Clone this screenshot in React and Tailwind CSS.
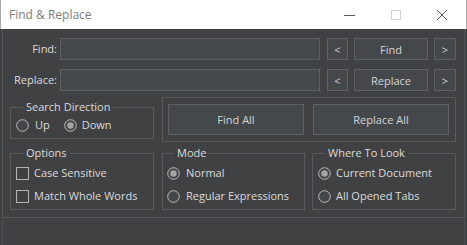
import React from 'react';

const Radio = ({ checked }) => (
  <svg width="13" height="13" viewBox="0 0 13 13" className="shrink-0">
    <circle cx="6.5" cy="6.5" r="5.8" fill="#45484a" stroke="#b9b9b9" strokeWidth="1" />
    {checked && <circle cx="6.5" cy="6.5" r="3.2" fill="#a3a3a3" />}
  </svg>
);

const Check = () => (
  <span className="block w-[13px] h-[13px] shrink-0 border border-[#b4b4b4] bg-[#3f4143]" />
);

const Option = ({ children, gap, control }) => (
  <div className={`flex items-center h-[14px] ${gap}`}>
    {control}
    <span className="leading-[14px] whitespace-nowrap">{children}</span>
  </div>
);

const Group = ({ title, width, pad, children }) => (
  <fieldset className={`${width} border border-[#585b5d] ${pad}`}>
    <legend className="ml-[7px] px-[3px] leading-[14px] text-[#dcdcdc]">{title}</legend>
    {children}
  </fieldset>
);

const Btn = ({ children, className }) => (
  <button
    type="button"
    className={`h-[22px] border border-[#5f6264] bg-[#45484a] text-[#d4d4d4] flex items-center justify-center leading-none ${className}`}
  >
    {children}
  </button>
);

const Input = () => (
  <div className="ml-[3px] w-[260px] h-[22px] border border-[#5e6163] bg-[#46494b]" />
);

export default function App() {
  return (
    <div
      className="w-[467px] h-[245px] flex flex-col bg-[#3f4143] text-[11px] text-[#dcdcdc] overflow-hidden"
      style={{ fontFamily: '"Open Sans", "Noto Sans", sans-serif' }}
    >
      {/* title bar */}
      <div className="h-[29px] shrink-0 bg-white border-x border-[#a9a9a9] flex items-center">
        <span className="ml-[8px] text-[12px] text-[#7c7c7c]">Find &amp; Replace</span>
        <div className="ml-auto flex items-center">
          <svg width="12" height="12" viewBox="0 0 12 12" className="mr-[34px]">
            <line x1="0" y1="6.5" x2="11" y2="6.5" stroke="#5a5a5a" strokeWidth="1" />
          </svg>
          <svg width="12" height="12" viewBox="0 0 12 12" className="mr-[34px]">
            <rect x="1.5" y="1.5" width="9" height="9" fill="none" stroke="#d2d2d2" strokeWidth="1" />
          </svg>
          <svg width="12" height="12" viewBox="0 0 12 12" className="mr-[18px]">
            <path d="M1 1 L11 11 M11 1 L1 11" stroke="#5a5a5a" strokeWidth="1" />
          </svg>
        </div>
      </div>

      {/* body */}
      <div className="flex-1 flex flex-col px-[2px]">
        <div className="border-x border-b border-[#54575a] pt-[9px] pb-[7px]">
          <div className="flex items-center h-[22px]">
            <span className="w-[54px] text-right">Find:</span>
            <Input />
            <Btn className="ml-[7px] w-[21px] text-[#b8b8b8]">&lt;</Btn>
            <Btn className="ml-[6px] w-[74px]">Find</Btn>
            <Btn className="ml-[6px] w-[22px] text-[#b8b8b8]">&gt;</Btn>
          </div>
          <div className="flex items-center h-[22px] mt-[9px]">
            <span className="w-[54px] text-right">Replace:</span>
            <Input />
            <Btn className="ml-[7px] w-[21px] text-[#b8b8b8]">&lt;</Btn>
            <Btn className="ml-[6px] w-[74px]">Replace</Btn>
            <Btn className="ml-[6px] w-[22px] text-[#b8b8b8]">&gt;</Btn>
          </div>

          <div className="flex items-start mt-[6px] pl-[7px]">
            <Group title="Search Direction" width="w-[144px] mt-[3px]" pad="pl-[5px] pt-[4px] pb-[6px]">
              <div className="flex items-center">
                <Option gap="gap-[6px]" control={<Radio />}>Up</Option>
                <div className="ml-[14px]">
                  <Option gap="gap-[5px]" control={<Radio checked />}>Down</Option>
                </div>
              </div>
            </Group>
            <div className="ml-[8px] w-[294px] h-[45px] border border-[#585b5d] px-[5px] pt-[6px] grid grid-cols-2 gap-[8px]">
              <Btn className="h-[31px] w-[136px]">Find All</Btn>
              <Btn className="h-[31px] w-[136px]">Replace All</Btn>
            </div>
          </div>

          <div className="flex items-start mt-[4px] pl-[7px]">
            <Group title="Options" width="w-[144px]" pad="pl-[5px] pt-[6px] pb-[6px]">
              <div className="flex flex-col gap-[9px]">
                <Option gap="gap-[5px]" control={<Check />}>Case Sensitive</Option>
                <Option gap="gap-[5px]" control={<Check />}>Match Whole Words</Option>
              </div>
            </Group>
            <Group title="Mode" width="ml-[8px] w-[143px]" pad="pl-[4px] pt-[6px] pb-[6px]">
              <div className="flex flex-col gap-[9px]">
                <Option gap="gap-[6px]" control={<Radio checked />}>Normal</Option>
                <Option gap="gap-[6px]" control={<Radio />}>Regular Expressions</Option>
              </div>
            </Group>
            <Group title="Where To Look" width="ml-[7px] w-[144px]" pad="pl-[5px] pt-[6px] pb-[6px]">
              <div className="flex flex-col gap-[9px]">
                <Option gap="gap-[5px]" control={<Radio checked />}>Current Document</Option>
                <Option gap="gap-[5px]" control={<Radio />}>All Opened Tabs</Option>
              </div>
            </Group>
          </div>
        </div>
        <div className="flex-1 border-x border-[#4c4f51]" />
      </div>
    </div>
  );
}
